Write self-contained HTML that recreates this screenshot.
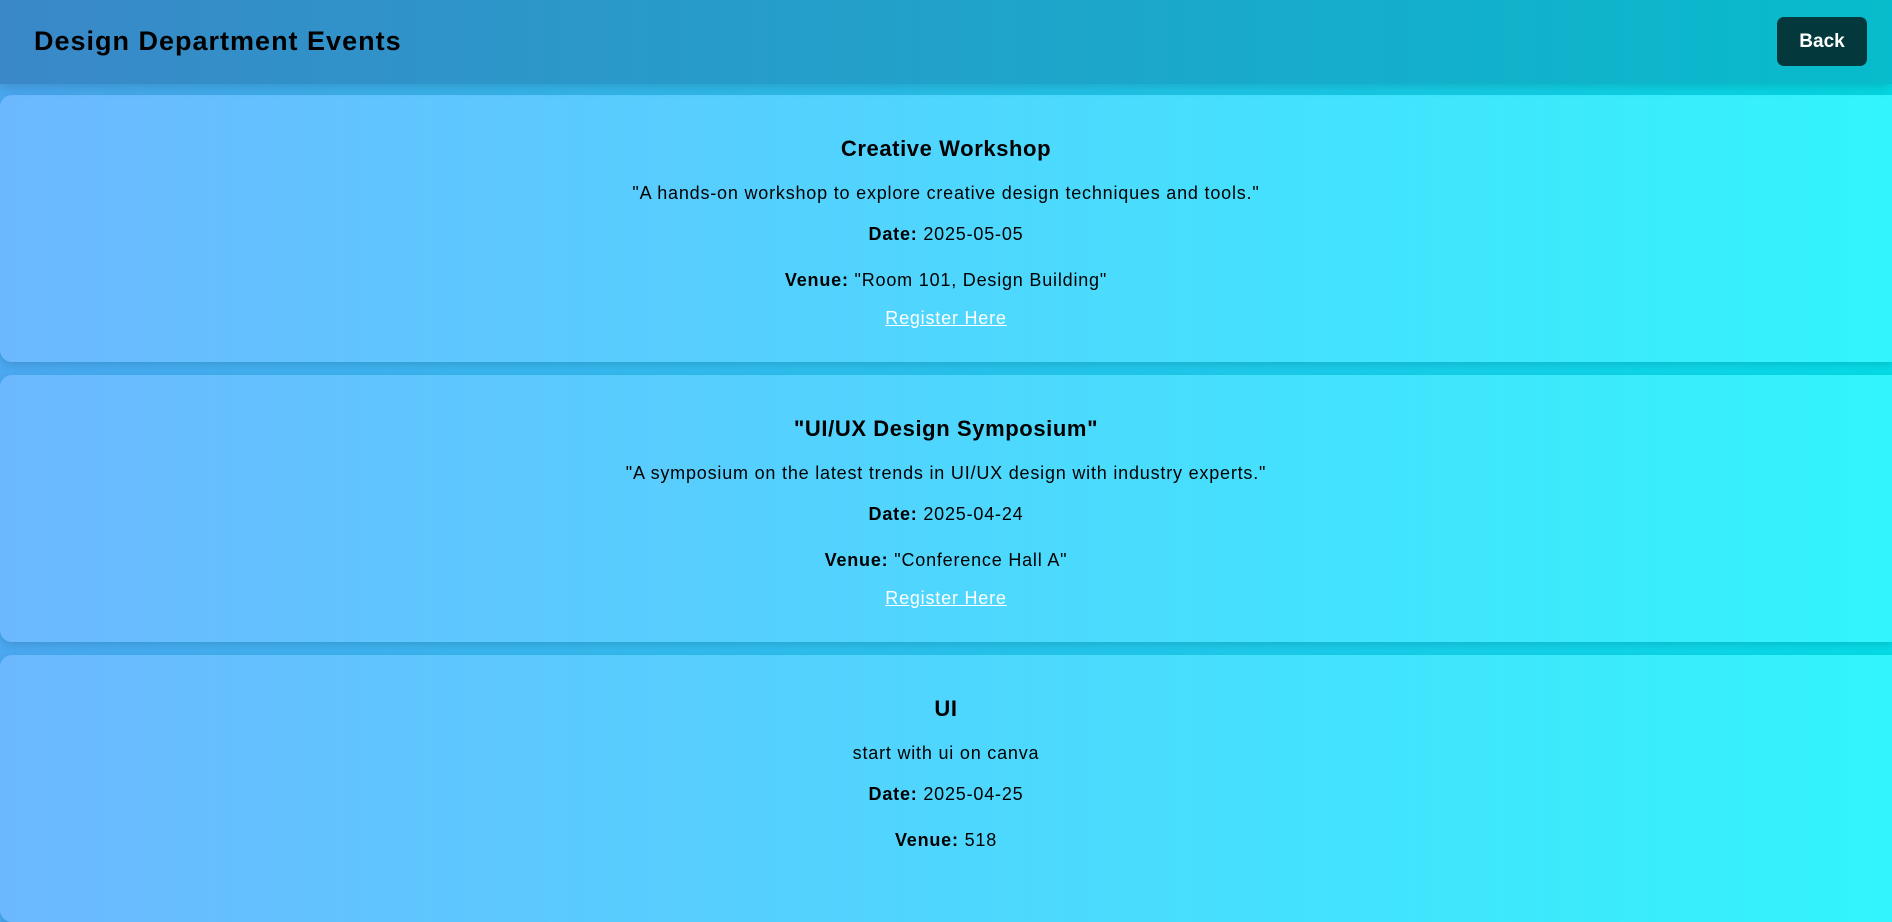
<!DOCTYPE html>
<html><head><style>
html,body{margin:0;padding:0;width:1892px;height:859px;overflow:hidden;font-family:"Liberation Sans",sans-serif;background:linear-gradient(90deg,#4aa8f0,#05dbe6);}
.hdr{position:absolute;left:0;top:0;width:1892px;height:84px;background:linear-gradient(90deg,#3a88c8,#07bccc);box-shadow:0 4px 10px rgba(0,0,0,.15);z-index:2}
.hdr h1{position:absolute;left:34px;top:26px;margin:0;font-size:27px;font-weight:bold;color:#000;letter-spacing:1px}
.back{position:absolute;left:1777px;top:17px;width:90px;height:49px;background:#03383c;border-radius:7px;color:#fff;font-weight:bold;font-size:19px;text-align:center;line-height:50px}
.card{position:absolute;left:0;background:linear-gradient(90deg,#6cb8ff,#32f4fc);border-radius:12px;box-shadow:0 3px 8px rgba(0,0,0,.12);text-align:center;color:#000;width:1892px;border-top-right-radius:0;border-bottom-right-radius:0}
.card div{position:absolute;left:0;width:100%;font-size:18px;letter-spacing:0.8px}
.t{font-weight:bold;font-size:22px!important;letter-spacing:0.6px!important}
a{color:#fff;text-decoration:underline}
</style></head><body>
<div class="hdr"><h1>Design Department Events</h1><div class="back">Back</div></div>
<div class="card" style="top:95px;height:267px">
<div class="t" style="top:41px">Creative Workshop</div>
<div style="top:88px">"A hands-on workshop to explore creative design techniques and tools."</div>
<div style="top:129px"><b>Date:</b> 2025-05-05</div>
<div style="top:175px"><b>Venue:</b> "Room 101, Design Building"</div>
<div style="top:213px"><a>Register Here</a></div>
</div>
<div class="card" style="top:375px;height:267px">
<div class="t" style="top:41px">"UI/UX Design Symposium"</div>
<div style="top:88px">"A symposium on the latest trends in UI/UX design with industry experts."</div>
<div style="top:129px"><b>Date:</b> 2025-04-24</div>
<div style="top:175px"><b>Venue:</b> "Conference Hall A"</div>
<div style="top:213px"><a>Register Here</a></div>
</div>
<div class="card" style="top:655px;height:267px">
<div class="t" style="top:41px">UI</div>
<div style="top:88px">start with ui on canva</div>
<div style="top:129px"><b>Date:</b> 2025-04-25</div>
<div style="top:175px"><b>Venue:</b> 518</div>
</div>
</body></html>
